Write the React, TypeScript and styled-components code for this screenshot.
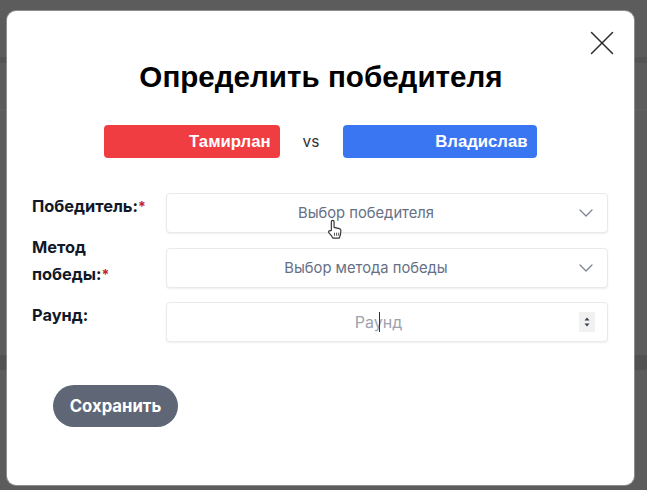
import React from 'react';
import styled, { createGlobalStyle } from 'styled-components';
import { ChevronDown, X } from 'lucide-react';

const GlobalStyle = createGlobalStyle`
  html, body {
    margin: 0;
    padding: 0;
    height: 100%;
    overflow: hidden;
    background: #5c5c5c;
    font-family: Inter, "Liberation Sans", sans-serif;
  }
`;

const Backdrop = styled.div`
  width: 647px;
  height: 490px;
  box-sizing: border-box;
  padding: 11px 13px 5px 7px;
  background: linear-gradient(
    to bottom,
    #5c5c5c 0 57px,
    #545454 57px 63px,
    #5c5c5c 63px 109px,
    #626262 109px 110px,
    #5c5c5c 110px 355px,
    #525252 355px 370px,
    #5c5c5c 370px 100%
  );
`;

const Dialog = styled.div`
  position: relative;
  height: 100%;
  box-sizing: border-box;
  padding: 47px 26px 0 25px;
  background: #fff;
  border-radius: 9px;
  box-shadow: 0 0 0 1px rgba(255, 255, 255, 0.3);
`;

const CloseButton = styled.button`
  position: absolute;
  top: 11px;
  right: 11px;
  width: 42px;
  height: 42px;
  padding: 0;
  border: 0;
  background: none;
  color: #2b2b2b;
  display: flex;
  align-items: center;
  justify-content: center;
`;

const Title = styled.h2`
  margin: 0 0 29px;
  padding-left: 2px;
  text-align: center;
  font-size: 29.6px;
  line-height: 38px;
  font-weight: 700;
  color: #000;
  font-family: "Liberation Sans", Arial, sans-serif;
`;

const Fighters = styled.div`
  display: flex;
  justify-content: center;
  align-items: center;
  margin-bottom: 35px;
`;

const Fighter = styled.div<{ $color: string; $width: number }>`
  width: ${({ $width }) => $width}px;
  height: 33px;
  box-sizing: border-box;
  padding: 1px 9px 0 0;
  border-radius: 4px;
  background: ${({ $color }) => $color};
  color: #fff;
  display: flex;
  align-items: center;
  justify-content: flex-end;
  font-size: 16.7px;
  font-weight: 700;
  font-family: "Liberation Sans", Arial, sans-serif;
`;

const Versus = styled.span`
  width: 63px;
  text-align: center;
  font-size: 15.5px;
  color: #333;
`;

const Form = styled.div`
  display: flex;
  flex-direction: column;
  gap: 14.500px;
`;

const Row = styled.div`
  display: grid;
  grid-template-columns: 134px 1fr;
  grid-template-rows: 40px;
  align-items: start;
`;

const Label = styled.label<{ $wrapped?: boolean }>`
  font-size: 16.4px;
  line-height: 27px;
  font-weight: 700;
  color: #111827;
  align-self: ${({ $wrapped }) => ($wrapped ? 'end' : 'start')};
`;

const Required = styled.span`
  color: #c8202f;
  font-size: 14px;
`;

const Control = styled.div<{ $offset: number }>`
  position: relative;
  height: 40px;
  box-sizing: border-box;
  border: 1px solid #e8eaee;
  border-radius: 4px;
  box-shadow: 0 1px 2px rgba(0, 0, 0, 0.07);
  background: #fff;
  display: flex;
  align-items: center;
  justify-content: center;
  padding-right: ${({ $offset }) => $offset}px;
  font-size: 14.75px;
  color: #667085;
`;

const Chevron = styled(ChevronDown)`
  position: absolute;
  right: 9px;
  top: 7px;
  color: #7b8494;
`;

const RoundText = styled.span`
  position: relative;
  font-size: 16px;
  color: #9ca3af;
`;

const Caret = styled.i`
  position: absolute;
  left: 24px;
  top: 0;
  width: 1px;
  height: 20px;
  background: #333;
`;

const Spinner = styled.div`
  position: absolute;
  right: 12px;
  top: 9px;
  width: 16px;
  height: 20px;
  background: #f1f1f1;
`;

const SubmitButton = styled.button`
  margin: 43px 0 0 21px;
  width: 125px;
  height: 42px;
  border: 0;
  border-radius: 21px;
  background: #5f6675;
  color: #fff;
  font-family: Inter, "Liberation Sans", sans-serif;
  font-size: 16.7px;
  font-weight: 700;
`;

const HandCursor = styled.svg`
  position: absolute;
  left: 159px;
  top: 25px;
`;

const App: React.FC = () => {
  return (
    <Backdrop>
      <GlobalStyle />
      <Dialog>
        <CloseButton aria-label="Закрыть">
          <X size={42} strokeWidth={0.85} />
        </CloseButton>
        <Title>Определить победителя</Title>
        <Fighters>
          <Fighter $color="#ef3d42" $width={176}>Тамирлан</Fighter>
          <Versus>vs</Versus>
          <Fighter $color="#3b76f2" $width={194}>Владислав</Fighter>
        </Fighters>
        <Form>
          <Row>
            <Label>
              Победитель:<Required>*</Required>
            </Label>
            <Control $offset={42}>
              Выбор победителя
              <Chevron size={24} strokeWidth={1.3} />
              <HandCursor width="17" height="21" viewBox="0 0 16 20" fill="#fff" stroke="#333" strokeWidth="1.1" strokeLinejoin="round">
                <path d="M5 11V2.600a1.300 1.300 0 0 1 2.600 0V8l5 1.200c1 .3 1.600 1 1.500 2l-.5 4c-.2 1.200-.6 2-1.200 3H6.600c-.8-1.300-2.500-3.500-4-5.200-.8-1 .3-2.400 1.500-1.700z" />
                <path d="M8 13v3M10 13v3M12 13v3" fill="none" strokeWidth="0.8" />
              </HandCursor>
            </Control>
          </Row>
          <Row>
            <Label $wrapped>
              Метод
              <br />
              победы:<Required>*</Required>
            </Label>
            <Control $offset={42}>
              Выбор метода победы
              <Chevron size={24} strokeWidth={1.3} />
            </Control>
          </Row>
          <Row>
            <Label>Раунд:</Label>
            <Control $offset={17}>
              <RoundText>
                Раунд
                <Caret />
              </RoundText>
              <Spinner>
                <svg width="16" height="20" viewBox="0 0 16 20" fill="#374151">
                  <path d="M8 5.500 10.500 8.500H5.500z" />
                  <path d="M8 14.500 5.500 11.500H10.500z" />
                </svg>
              </Spinner>
            </Control>
          </Row>
        </Form>
        <SubmitButton>Сохранить</SubmitButton>
      </Dialog>
    </Backdrop>
  );
};

export default App;
